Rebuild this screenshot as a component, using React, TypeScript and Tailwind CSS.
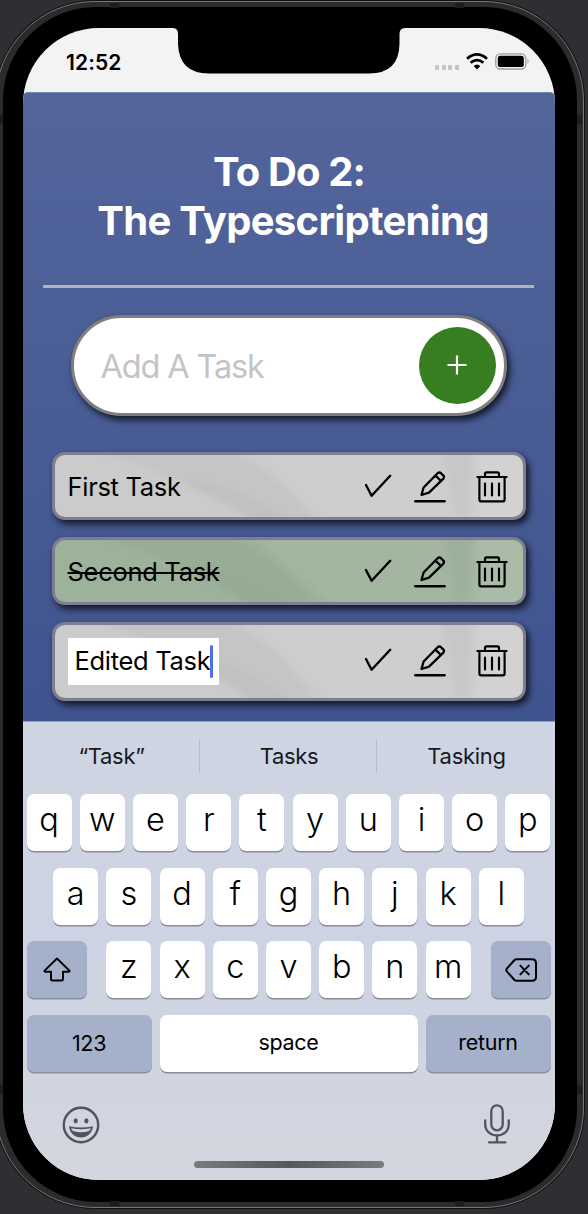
import React from "react";

type TaskProps = { label: string; tone?: "plain" | "done"; editing?: boolean };

function CheckIcon() {
  return (
    <svg width="28" height="32" viewBox="0 0 28 32" fill="none" stroke="#000" strokeWidth="2.4" strokeLinecap="round" strokeLinejoin="round">
      <path d="M2 14 7.600 24.700 26.200 4.800" />
    </svg>
  );
}

function PencilIcon() {
  return (
    <svg width="32" height="32" viewBox="0 0 32 32" fill="none" stroke="#000" strokeWidth="2.300" strokeLinecap="round" strokeLinejoin="round">
      <path d="M7.500 24 9.600 16.500 23.600 2.200Q25.400.8 27 2.200L29.400 4.600Q30.600 6 29.400 7.600L15 21.600Z M21.500 4.600 27 10" />
      <path d="M1.200 30.200H30.600" strokeWidth="2.400" />
    </svg>
  );
}

function TrashIcon() {
  return (
    <svg width="32" height="32" viewBox="0 0 32 32" fill="none" stroke="#000" strokeWidth="2.200" strokeLinecap="round" strokeLinejoin="round">
      <path d="M1.400 6H30.600M3.400 6V28.600Q3.400 30.400 5 30.400H27Q28.600 30.400 28.600 28.600V6M9 5.600V3Q9 1.400 10.600 1.400H21.400Q23 1.400 23 3V5.600" />
      <path d="M9 12.600V24.400M16 12.600V24.400M23 12.600V24.400" />
    </svg>
  );
}

function Folds() {
  return (
    <svg className="absolute inset-0 h-full w-full" viewBox="0 0 470 64" preserveAspectRatio="none">
      <defs>
        <filter id="soft" x="-10%" y="-20%" width="120%" height="140%">
          <feGaussianBlur stdDeviation="5 2" />
        </filter>
      </defs>
      <g filter="url(#soft)">
        <path d="M30 -6Q120 16 200 70H262Q230 20 170 -6Z" fill="#000" opacity=".03" />
        <path d="M120 30Q170 44 200 70H240Q200 40 150 26Z" fill="#000" opacity=".02" />
        <path d="M200 -6 280 70 480 70 480 -6Z" fill="#fff" opacity=".05" />
        <path d="M388 -6H422L414 70H404Z" fill="#000" opacity=".03" />
        <path d="M424 -6H480V70H424Z" fill="#fff" opacity=".09" />
      </g>
    </svg>
  );
}

function Task({ label, tone = "plain", editing = false }: TaskProps) {
  const bg = tone === "done" ? "bg-[#9db29b]" : "bg-[#cbcbcb]";
  const h = editing ? "h-[79px]" : "h-[68px]";
  return (
    <li className={`relative flex w-[474px] items-center overflow-hidden rounded-[13px] border-[3px] border-[#7f7d92] pr-[14.500px] pl-[13px] ${bg} ${h}`}>
      <Folds />
      <div className="relative flex-1">
        {editing ? (
          <span className="flex h-[47px] w-[151px] items-center bg-white pl-[7px] text-[25.5px] tracking-[-0.3px] whitespace-nowrap">
            {label}
            <span className="h-[33px] w-[3px] shrink-0 rounded-full bg-[#4c6fee]" />
          </span>
        ) : (
          <span className={tone === "done" ? "relative top-[1.500px] text-[25.5px] tracking-[-0.3px] line-through decoration-2" : "relative top-[1.500px] text-[25.5px] tracking-[-0.3px]"}>{label}</span>
        )}
      </div>
      <div className={editing ? "relative flex items-center" : "relative flex items-center pt-[2px]"}>
        <CheckIcon />
        <span className="ml-[22px] flex"><PencilIcon /></span>
        <span className="ml-[30px] flex"><TrashIcon /></span>
      </div>
    </li>
  );
}

function Key({ children }: { children: string }) {
  return (
    <span className="flex h-[57px] w-[45px] justify-center rounded-[7px] bg-white text-[32.500px] leading-[51px] font-[330] shadow-[0_1.500px_0_#898c96]">
      {children}
    </span>
  );
}

function Letters({ keys }: { keys: string }) {
  return (
    <div className="flex gap-[8.2px]">
      {keys.split("").map((k) => (
        <Key key={k}>{k}</Key>
      ))}
    </div>
  );
}

function Keyboard() {
  return (
    <section className="flex h-[459px] flex-col border-t border-[#93a0c8] bg-linear-to-b from-[#cfd5e3] via-[#cdd3e2] to-[#d4d6de] pt-[17px]">
      <div className="flex h-[35px] items-center text-center text-[22px] tracking-[-0.3px] text-[#17191c]">
        <span className="w-[176px] pl-[2px]">“Task”</span>
        <span className="h-[34px] w-px bg-[#b8bece]" />
        <span className="w-[176px] pl-[3px]">Tasks</span>
        <span className="h-[34px] w-px bg-[#b8bece]" />
        <span className="w-[177px] pl-[3px]">Tasking</span>
      </div>
      <div className="mt-[20px] flex flex-col items-center gap-[17px]">
        <Letters keys="qwertyuiop" />
        <Letters keys="asdfghjkl" />
        <div className="-mt-[0.500px] flex w-[524px] justify-between">
          <span className="flex h-[57px] w-[60px] items-center justify-center rounded-[7px] bg-[#a5b0ca] shadow-[0_1.500px_0_#8990a1]">
            <svg width="28" height="25" viewBox="0 0 28 25" fill="none" stroke="#000" strokeWidth="2" strokeLinejoin="round">
              <path d="M14 1.500 26.400 13.600Q26.800 14.600 25.800 14.700H20V22Q20 23.500 18.600 23.500H9.600Q8 23.500 8 22V14.700H2.200Q1.200 14.600 1.600 13.600Z" />
            </svg>
          </span>
          <Letters keys="zxcvbnm" />
          <span className="flex h-[57px] w-[60px] items-center justify-center rounded-[7px] bg-[#a5b0ca] shadow-[0_1.500px_0_#8990a1]">
            <svg width="32" height="24" viewBox="0 0 32 24" fill="none" stroke="#000" strokeWidth="2" strokeLinecap="round" strokeLinejoin="round">
              <path d="M11.500 1.200H27Q31 1.200 31 5V19Q31 22.800 27 22.800H11.500Q10.400 22.800 9.500 22L1.800 13.400Q.8 12 1.800 10.600L9.500 2Q10.400 1.200 11.500 1.200ZM15.400 7.600 23.800 16.400M23.800 7.600 15.400 16.400" />
            </svg>
          </span>
        </div>
        <div className="-mt-[0.500px] flex w-[524px] justify-between text-[21.5px] leading-[55px] tracking-[-0.300px]">
          <span className="h-[57px] w-[125px] rounded-[7px] bg-[#a5b0ca] text-center leading-[56px] shadow-[0_1.500px_0_#8990a1]">123</span>
          <span className="h-[57px] w-[258px] rounded-[7px] bg-white text-center leading-[54px] shadow-[0_1.500px_0_#898c96]">space</span>
          <span className="h-[57px] w-[125px] rounded-[7px] bg-[#a5b0ca] text-center leading-[54px] shadow-[0_1.500px_0_#8990a1]">return</span>
        </div>
      </div>
      <div className="mt-[32px] flex justify-between pr-[44px] pl-[39px]">
        <svg className="mt-[2px]" width="38" height="38" viewBox="0 0 38 38">
          <circle cx="19" cy="19" r="17.2" fill="none" stroke="#50545c" strokeWidth="2.4" />
          <ellipse cx="13.7" cy="14.8" rx="2.1" ry="2.6" fill="#50545c" />
          <ellipse cx="24.4" cy="14.8" rx="2.1" ry="2.6" fill="#50545c" />
          <path d="M7 20.200Q19 23 31 20.200C30.500 27 25 31.400 19 31.400S7.500 27 7 20.200Z" fill="#50545c" />
          <path d="M9.200 22.200Q19 24.300 28.800 22.200Q28.300 24.200 27 25Q19 27.600 11 25Q9.700 24.200 9.200 22.200Z" fill="#d1d5df" />
        </svg>
        <svg width="28" height="40" viewBox="0 0 28 40" fill="none" stroke="#50545c" strokeWidth="2.300" strokeLinecap="round">
          <rect x="8.300" y="1.300" width="11.400" height="25" rx="5.700" />
          <path d="M2.200 16.500V20C2.200 27 7 31.300 14 31.300S25.800 27 25.800 20V16.500M14 31.500V38.300M6 38.300H22.500" />
        </svg>
      </div>
      <div className="mt-[17.500px] ml-[171px] h-[7px] w-[190px] rounded-full bg-linear-to-r from-[#7b7b7d] via-[#58585b] to-[#7b7b7d]" />
    </section>
  );
}

export default function App() {
  return (
    <div className="h-[1214px] w-[588px] overflow-hidden bg-[#2e2f33] font-['Inter','Liberation_Sans',sans-serif] text-black">
      <div className="relative mt-[1px] -ml-[5px] h-[1207px] w-[589px] rounded-[100px] border-[1.5px] border-[#777] bg-[#2b2b2b] pt-[5px] pr-[6px] pb-[5px] pl-[6.500px] shadow-[0_0_0_1px_#111]">
        <i className="absolute top-[1px] left-[114px] h-[5px] w-[9px] bg-[#1d1d1d]" />
        <i className="absolute top-[1px] right-[119px] h-[5px] w-[9px] bg-[#1d1d1d]" />
        <i className="absolute bottom-[1px] left-[114px] h-[5px] w-[9px] bg-[#1d1d1d]" />
        <i className="absolute right-[119px] bottom-[1px] h-[5px] w-[9px] bg-[#1d1d1d]" />
        <i className="absolute top-[113px] left-[1px] h-[9px] w-[6px] bg-[#1d1d1d]" />
        <i className="absolute top-[113px] right-[1px] h-[9px] w-[5px] bg-[#1d1d1d]" />
        <i className="absolute bottom-[113px] left-[1px] h-[9px] w-[6px] bg-[#1d1d1d]" />
        <i className="absolute right-[1px] bottom-[113px] h-[9px] w-[5px] bg-[#1d1d1d]" />
        <div className="h-full w-full rounded-[93px] bg-black pt-[20.5px] pl-[20px]">
          <div className="relative flex h-[1152px] w-[532px] flex-col overflow-hidden rounded-[76px] bg-[#f3f3f3]">
            <header className="flex h-[64px] shrink-0 items-center justify-between pt-[4px] pr-[25px] pl-[43.500px]">
              <span className="relative top-[1px] text-[21px] font-[580] tracking-[0.100px]">12:52</span>
              <svg className="absolute top-0 left-[150px]" width="232" height="46" viewBox="0 0 232 46">
                <path d="M0 0Q5 0 5 6V16Q6 45.500 36 45.500H196Q226 45.500 226.500 16V6Q226.500 0 232 0Z" fill="#000" />
              </svg>
              <div className="flex items-center">
                <span className="mt-[11px] flex gap-[2.500px]">
                  <i className="h-[5px] w-[4px] rounded-[1px] bg-[#c4c4c4]" />
                  <i className="h-[5px] w-[4px] rounded-[1px] bg-[#c4c4c4]" />
                  <i className="h-[5px] w-[4px] rounded-[1px] bg-[#c4c4c4]" />
                  <i className="h-[5px] w-[4px] rounded-[1px] bg-[#c4c4c4]" />
                </span>
                <svg className="ml-[7px]" width="22" height="17" viewBox="0 0 22 17" fill="none" stroke="#000" strokeWidth="2.700">
                  <path d="M1 5.700Q11 -2.800 21 5.700M4.600 9.800Q11 4.400 17.400 9.800" />
                  <path d="M7.600 13Q11 9.800 14.400 13L11 16.400Z" fill="#000" stroke="none" />
                </svg>
                <svg className="ml-[7px]" width="35" height="17" viewBox="0 0 35 17">
                  <rect x=".8" y=".8" width="30" height="15.200" rx="4.500" fill="none" stroke="#9b9b9b" strokeWidth="1.300" />
                  <rect x="2.800" y="2.800" width="26" height="11.200" rx="2.600" />
                  <path d="M32.600 5.700Q34.500 8.400 32.600 11.200Z" fill="#8d8d8d" />
                </svg>
              </div>
            </header>
            <main className="flex h-[629px] shrink-0 flex-col items-center rounded-t-[5px] border-t border-[#7385b2] bg-linear-to-b from-[#53659b] to-[#3f548f] pt-[54px]">
              <h1 className="flex flex-col text-center text-[40px] leading-[49px] font-bold tracking-[-0.700px] whitespace-nowrap text-white">
                <span className="pl-[1px] tracking-[-0.900px]">To Do 2:</span>
                <span className="pl-[9px]">The Typescriptening</span>
              </h1>
              <div className="mt-[40.500px] h-[2.500px] w-[491px] bg-[#b3b2bd]" />
              <div className="mt-[27px] flex h-[101px] w-[436px] items-center justify-between rounded-full border-[3px] border-[#7f7f7f] bg-white pr-[8px] pl-[27px] shadow-[3px_4px_7px_rgba(0,0,0,0.75)]">
                <span className="relative top-[2px] text-[32.500px] tracking-[-1.150px] text-[#c4c4c6]">Add A Task</span>
                <span className="flex h-[77px] w-[77px] items-center justify-center rounded-full bg-[#377e22]">
                  <svg width="20" height="20" viewBox="0 0 20 20" stroke="#fff" strokeWidth="2.200"><path d="M10 .5V19.500M.5 10H19.500" /></svg>
                </span>
              </div>
              <ul className="mt-[36px] flex flex-col gap-[17px] *:shadow-[3px_4px_7px_rgba(0,0,0,0.75)]">
                <Task label="First Task" />
                <Task label="Second Task" tone="done" />
                <Task label="Edited Task" editing />
              </ul>
            </main>
            <Keyboard />
          </div>
        </div>
      </div>
    </div>
  );
}
